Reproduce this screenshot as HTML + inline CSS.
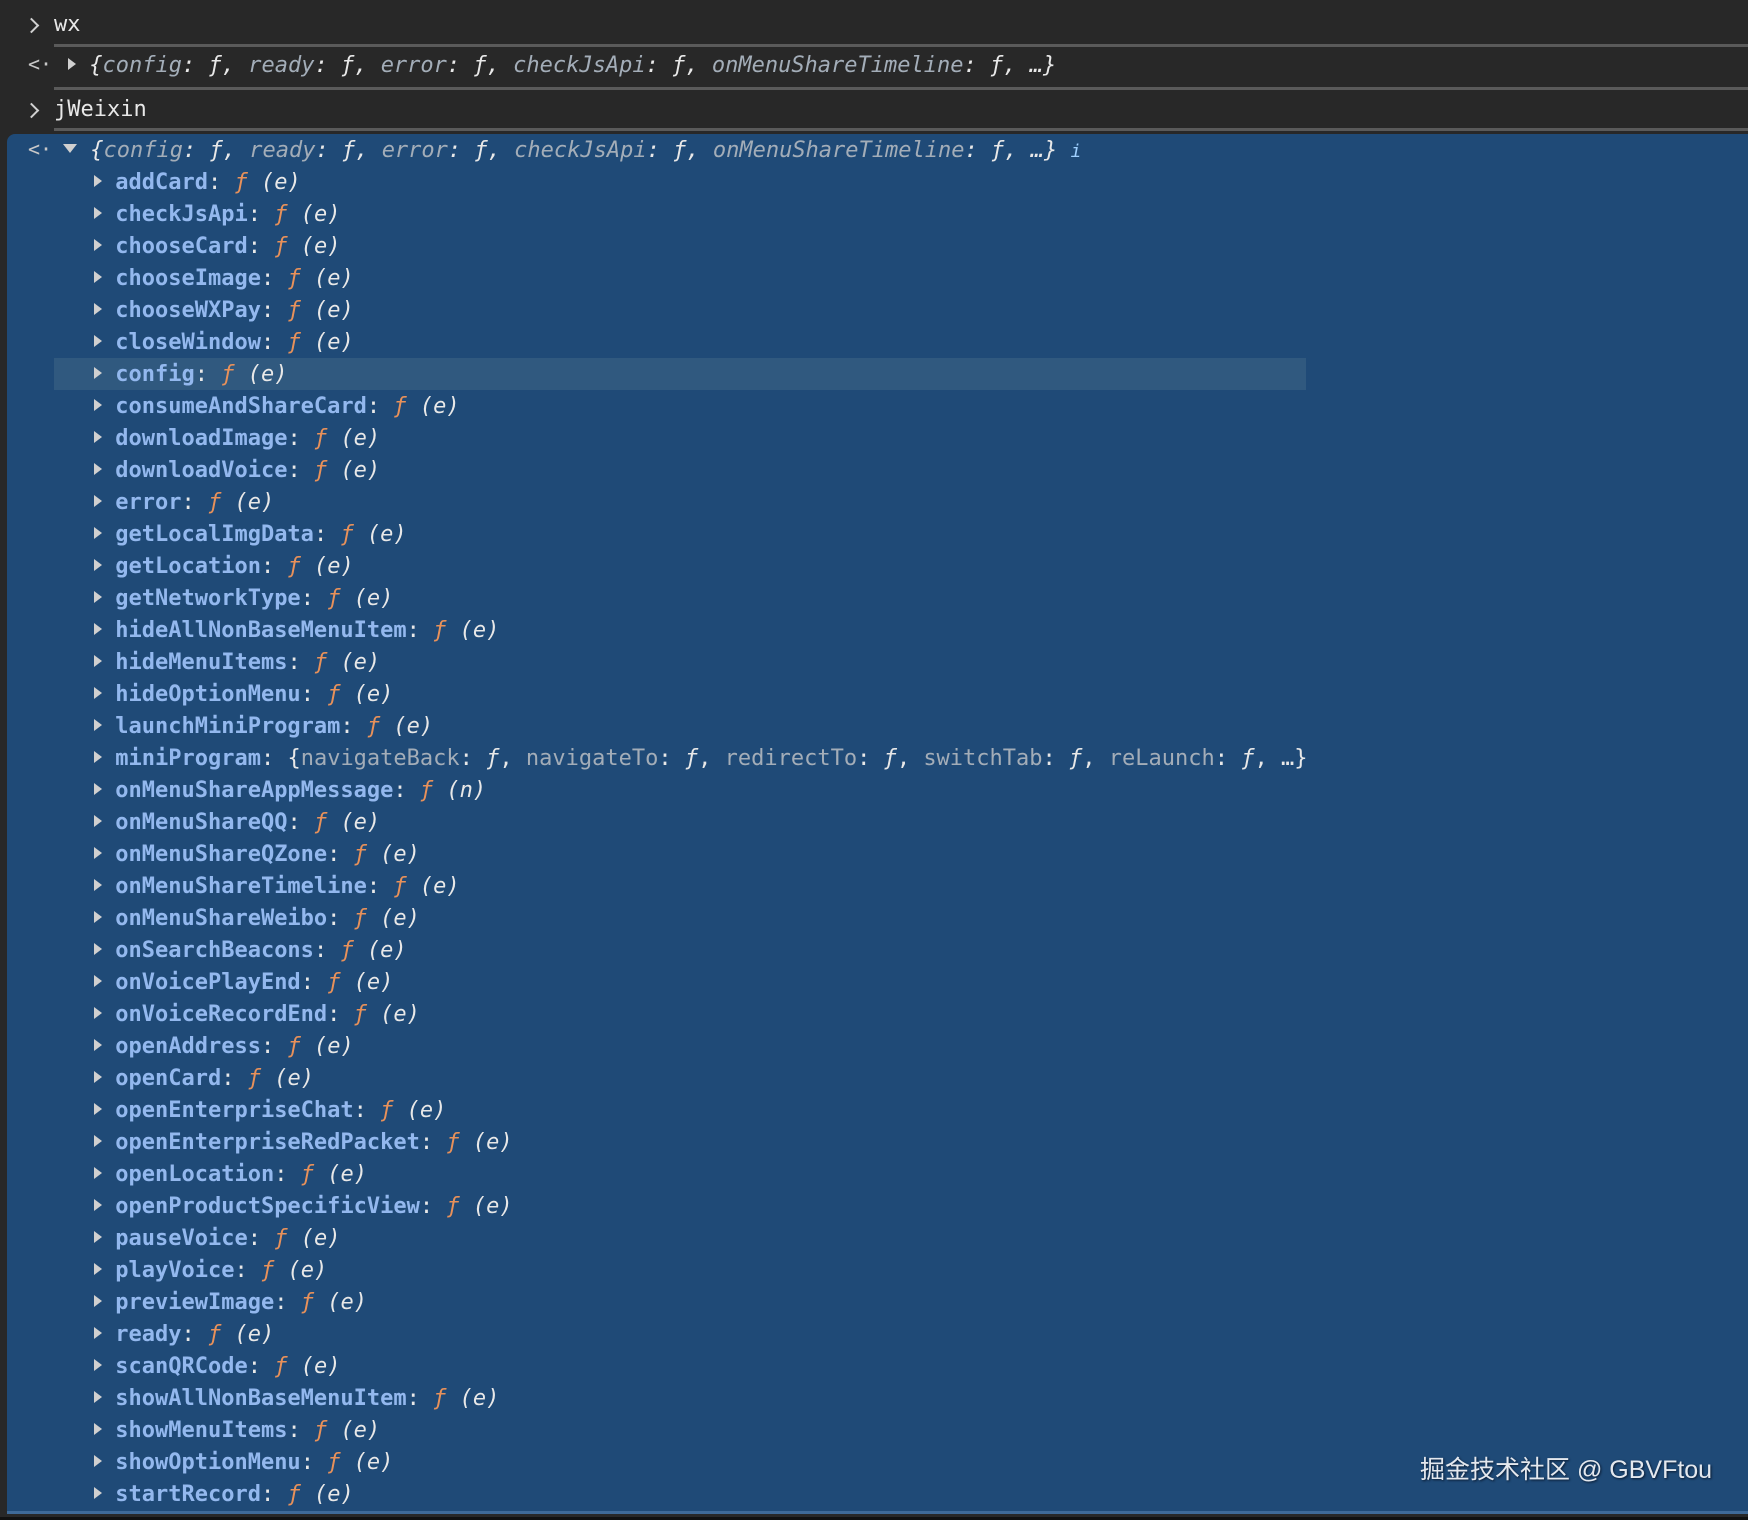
<!DOCTYPE html>
<html><head><meta charset="utf-8"><style>
*{margin:0;padding:0;box-sizing:border-box}
body{width:1748px;height:1520px;background:#282828;position:relative;overflow:hidden;font-family:"DejaVu Sans Mono","Liberation Mono",monospace;font-size:22px;color:#e8e8e8}
.ln{position:absolute;left:54px;right:0;height:3px;background:#5a5a5a}
.t{position:absolute;left:0;height:40px;line-height:40px;white-space:pre}
.chev{position:absolute;left:28px;width:11px;height:11px;border-right:2.5px solid #d0d0d0;border-top:2.5px solid #d0d0d0;transform:rotate(45deg)}
.back{position:absolute;left:28px;color:#c8c8c8;font-size:20px}
.panel{position:absolute;left:7px;top:134px;right:0;height:1380px;background:#1f4a77;border-radius:8px 0 0 0;border-bottom:3px solid #3f6a98}
.hl{position:absolute;left:54px;top:358px;width:1252px;height:32px;background:#30597f}
.i{font-style:italic}
.g{color:#a3adb8;font-style:italic}
.tri{display:inline-block;width:0;height:0;border-top:6px solid transparent;border-bottom:6px solid transparent;border-left:8px solid #d0d0d0;vertical-align:middle;position:relative;top:-2px}
.trd{display:inline-block;width:0;height:0;border-left:7px solid transparent;border-right:7px solid transparent;border-top:9px solid #d0d0d0;vertical-align:middle;position:relative;top:-3px}
#rows{position:absolute;left:94px;top:167px}
#rows div{height:32px;line-height:32px;white-space:pre}
.k{color:#93b8ee;font-weight:bold}
.f{color:#e8915a;font-style:italic}
.a{font-style:italic;color:#e8e8e8}
.pk{color:#a3adb8}
.wm{position:absolute;left:1420px;top:1450px;font-family:"Liberation Sans","Noto Sans CJK SC",sans-serif;font-size:25px;color:#e4e8ee;text-shadow:1px 1px 2px #0a1a30;white-space:pre}
</style></head><body>
<div class="chev" style="top:20px;left:26px"></div>
<div class="t" style="left:54px;top:5px">wx</div>
<div class="ln" style="top:44px"></div>
<div class="back" style="top:52px">&lt;·</div>
<div class="t" style="left:68px;top:46px"><span class="tri"></span> <span class="i">{</span><span class="g">config</span><span class="i">: ƒ, </span><span class="g">ready</span><span class="i">: ƒ, </span><span class="g">error</span><span class="i">: ƒ, </span><span class="g">checkJsApi</span><span class="i">: ƒ, </span><span class="g">onMenuShareTimeline</span><span class="i">: ƒ, …}</span></div>
<div class="ln" style="top:87px"></div>
<div class="chev" style="top:105px;left:26px"></div>
<div class="t" style="left:54px;top:90px">jWeixin</div>
<div class="ln" style="top:128px"></div>
<div class="panel"></div>
<div class="hl"></div>
<div class="back" style="top:137px">&lt;·</div>
<div class="t" style="left:63px;top:131px"><span class="trd"></span> <span class="i">{</span><span class="g">config</span><span class="i">: ƒ, </span><span class="g">ready</span><span class="i">: ƒ, </span><span class="g">error</span><span class="i">: ƒ, </span><span class="g">checkJsApi</span><span class="i">: ƒ, </span><span class="g">onMenuShareTimeline</span><span class="i">: ƒ, …} </span><span class="i" style="color:#9fd0ff;font-size:18px">i</span></div>
<div id="rows">
<div><span class="tri"></span> <span class="k">addCard</span>: <span class="f">ƒ</span> <span class="a">(e)</span></div>
<div><span class="tri"></span> <span class="k">checkJsApi</span>: <span class="f">ƒ</span> <span class="a">(e)</span></div>
<div><span class="tri"></span> <span class="k">chooseCard</span>: <span class="f">ƒ</span> <span class="a">(e)</span></div>
<div><span class="tri"></span> <span class="k">chooseImage</span>: <span class="f">ƒ</span> <span class="a">(e)</span></div>
<div><span class="tri"></span> <span class="k">chooseWXPay</span>: <span class="f">ƒ</span> <span class="a">(e)</span></div>
<div><span class="tri"></span> <span class="k">closeWindow</span>: <span class="f">ƒ</span> <span class="a">(e)</span></div>
<div><span class="tri"></span> <span class="k">config</span>: <span class="f">ƒ</span> <span class="a">(e)</span></div>
<div><span class="tri"></span> <span class="k">consumeAndShareCard</span>: <span class="f">ƒ</span> <span class="a">(e)</span></div>
<div><span class="tri"></span> <span class="k">downloadImage</span>: <span class="f">ƒ</span> <span class="a">(e)</span></div>
<div><span class="tri"></span> <span class="k">downloadVoice</span>: <span class="f">ƒ</span> <span class="a">(e)</span></div>
<div><span class="tri"></span> <span class="k">error</span>: <span class="f">ƒ</span> <span class="a">(e)</span></div>
<div><span class="tri"></span> <span class="k">getLocalImgData</span>: <span class="f">ƒ</span> <span class="a">(e)</span></div>
<div><span class="tri"></span> <span class="k">getLocation</span>: <span class="f">ƒ</span> <span class="a">(e)</span></div>
<div><span class="tri"></span> <span class="k">getNetworkType</span>: <span class="f">ƒ</span> <span class="a">(e)</span></div>
<div><span class="tri"></span> <span class="k">hideAllNonBaseMenuItem</span>: <span class="f">ƒ</span> <span class="a">(e)</span></div>
<div><span class="tri"></span> <span class="k">hideMenuItems</span>: <span class="f">ƒ</span> <span class="a">(e)</span></div>
<div><span class="tri"></span> <span class="k">hideOptionMenu</span>: <span class="f">ƒ</span> <span class="a">(e)</span></div>
<div><span class="tri"></span> <span class="k">launchMiniProgram</span>: <span class="f">ƒ</span> <span class="a">(e)</span></div>
<div><span class="tri"></span> <span class="k">miniProgram</span>: {<span class="pk">navigateBack</span>: <span class="a">ƒ</span>, <span class="pk">navigateTo</span>: <span class="a">ƒ</span>, <span class="pk">redirectTo</span>: <span class="a">ƒ</span>, <span class="pk">switchTab</span>: <span class="a">ƒ</span>, <span class="pk">reLaunch</span>: <span class="a">ƒ</span>, …}</div>
<div><span class="tri"></span> <span class="k">onMenuShareAppMessage</span>: <span class="f">ƒ</span> <span class="a">(n)</span></div>
<div><span class="tri"></span> <span class="k">onMenuShareQQ</span>: <span class="f">ƒ</span> <span class="a">(e)</span></div>
<div><span class="tri"></span> <span class="k">onMenuShareQZone</span>: <span class="f">ƒ</span> <span class="a">(e)</span></div>
<div><span class="tri"></span> <span class="k">onMenuShareTimeline</span>: <span class="f">ƒ</span> <span class="a">(e)</span></div>
<div><span class="tri"></span> <span class="k">onMenuShareWeibo</span>: <span class="f">ƒ</span> <span class="a">(e)</span></div>
<div><span class="tri"></span> <span class="k">onSearchBeacons</span>: <span class="f">ƒ</span> <span class="a">(e)</span></div>
<div><span class="tri"></span> <span class="k">onVoicePlayEnd</span>: <span class="f">ƒ</span> <span class="a">(e)</span></div>
<div><span class="tri"></span> <span class="k">onVoiceRecordEnd</span>: <span class="f">ƒ</span> <span class="a">(e)</span></div>
<div><span class="tri"></span> <span class="k">openAddress</span>: <span class="f">ƒ</span> <span class="a">(e)</span></div>
<div><span class="tri"></span> <span class="k">openCard</span>: <span class="f">ƒ</span> <span class="a">(e)</span></div>
<div><span class="tri"></span> <span class="k">openEnterpriseChat</span>: <span class="f">ƒ</span> <span class="a">(e)</span></div>
<div><span class="tri"></span> <span class="k">openEnterpriseRedPacket</span>: <span class="f">ƒ</span> <span class="a">(e)</span></div>
<div><span class="tri"></span> <span class="k">openLocation</span>: <span class="f">ƒ</span> <span class="a">(e)</span></div>
<div><span class="tri"></span> <span class="k">openProductSpecificView</span>: <span class="f">ƒ</span> <span class="a">(e)</span></div>
<div><span class="tri"></span> <span class="k">pauseVoice</span>: <span class="f">ƒ</span> <span class="a">(e)</span></div>
<div><span class="tri"></span> <span class="k">playVoice</span>: <span class="f">ƒ</span> <span class="a">(e)</span></div>
<div><span class="tri"></span> <span class="k">previewImage</span>: <span class="f">ƒ</span> <span class="a">(e)</span></div>
<div><span class="tri"></span> <span class="k">ready</span>: <span class="f">ƒ</span> <span class="a">(e)</span></div>
<div><span class="tri"></span> <span class="k">scanQRCode</span>: <span class="f">ƒ</span> <span class="a">(e)</span></div>
<div><span class="tri"></span> <span class="k">showAllNonBaseMenuItem</span>: <span class="f">ƒ</span> <span class="a">(e)</span></div>
<div><span class="tri"></span> <span class="k">showMenuItems</span>: <span class="f">ƒ</span> <span class="a">(e)</span></div>
<div><span class="tri"></span> <span class="k">showOptionMenu</span>: <span class="f">ƒ</span> <span class="a">(e)</span></div>
<div><span class="tri"></span> <span class="k">startRecord</span>: <span class="f">ƒ</span> <span class="a">(e)</span></div>
</div>
<div class="wm">掘金技术社区 @ GBVFtou</div>
<div style="position:absolute;left:0;right:0;top:1517px;height:3px;background:#111"></div>
</body></html>
